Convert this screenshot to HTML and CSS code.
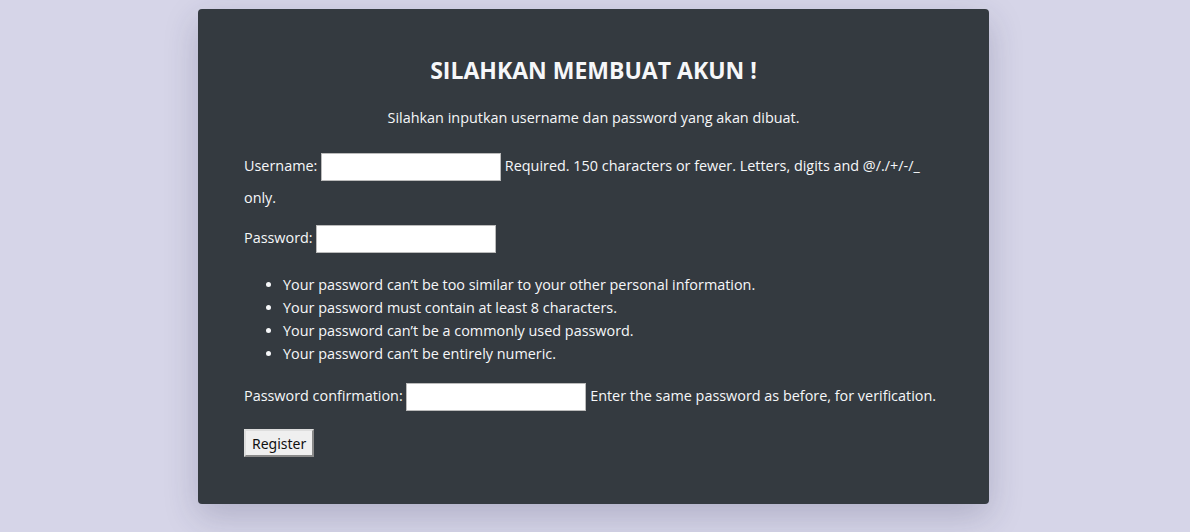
FILE: index.html
```html
<!DOCTYPE html>
<html>
<head>
<meta charset="utf-8">
<link rel="stylesheet" href="styles.css">
</head>
<body>
<div class="card">
  <h2 class="title">SILAHKAN MEMBUAT AKUN !</h2>
  <p class="subtitle">Silahkan inputkan username dan password yang akan dibuat.</p>
  <form class="form">
    <p class="row">Username: <input type="text" class="field"> <span class="help">Required. 150 characters or fewer. Letters, digits and @/./+/-/_ only.</span></p>
    <p class="row">Password: <input type="password" class="field"></p>
    <ul class="rules">
      <li>Your password can’t be too similar to your other personal information.</li>
      <li>Your password must contain at least 8 characters.</li>
      <li>Your password can’t be a commonly used password.</li>
      <li>Your password can’t be entirely numeric.</li>
    </ul>
    <p class="row">Password confirmation: <input type="password" class="field"> <span class="help">Enter the same password as before, for verification.</span></p>
    <button type="button" class="btn">Register</button>
  </form>
</div>
</body>
</html>
```
FILE: styles.css
```css
html, body {
  margin: 0;
  padding: 0;
}
body {
  background: #d6d5e8;
  font-family: "Open Sans", "Noto Sans", sans-serif;
  font-size: 14.4px;
  color: #f6f7f9;
  height: 532px;
  overflow: hidden;
}
.card {
  width: 791px;
  margin: 9px 0 0 198px;
  background: #343a40;
  border-radius: 4px;
  box-shadow: 0 12px 34px rgba(40, 40, 80, 0.22);
  padding: 47px 46px 47px;
  box-sizing: border-box;
}
.title {
  margin: 0;
  text-align: center;
  font-size: 23px;
  font-weight: 700;
  line-height: 28px;
}
.subtitle {
  margin: 24px 0 0;
  text-align: center;
  line-height: 20px;
}
.form {
  margin-top: 22px;
}
.row {
  margin: 0 0 8px;
  line-height: 32px;
}
.field {
  width: 180px;
  height: 28px;
  box-sizing: border-box;
  border: 1px solid #bbb;
  background: #fff;
  vertical-align: middle;
  padding: 0 4px;
  margin: 0;
}
.rules {
  margin: 19px 0 15px;
  padding-left: 39px;
  line-height: 23px;
}
.btn {
  display: block;
  font-family: "Noto Sans", "Open Sans", sans-serif;
  font-size: 14px;
  height: 28px;
  padding: 0 6px;
  background: #efefef;
  color: #111;
  border: 2px outset #ddd;
  margin-top: 17px;
}
```
